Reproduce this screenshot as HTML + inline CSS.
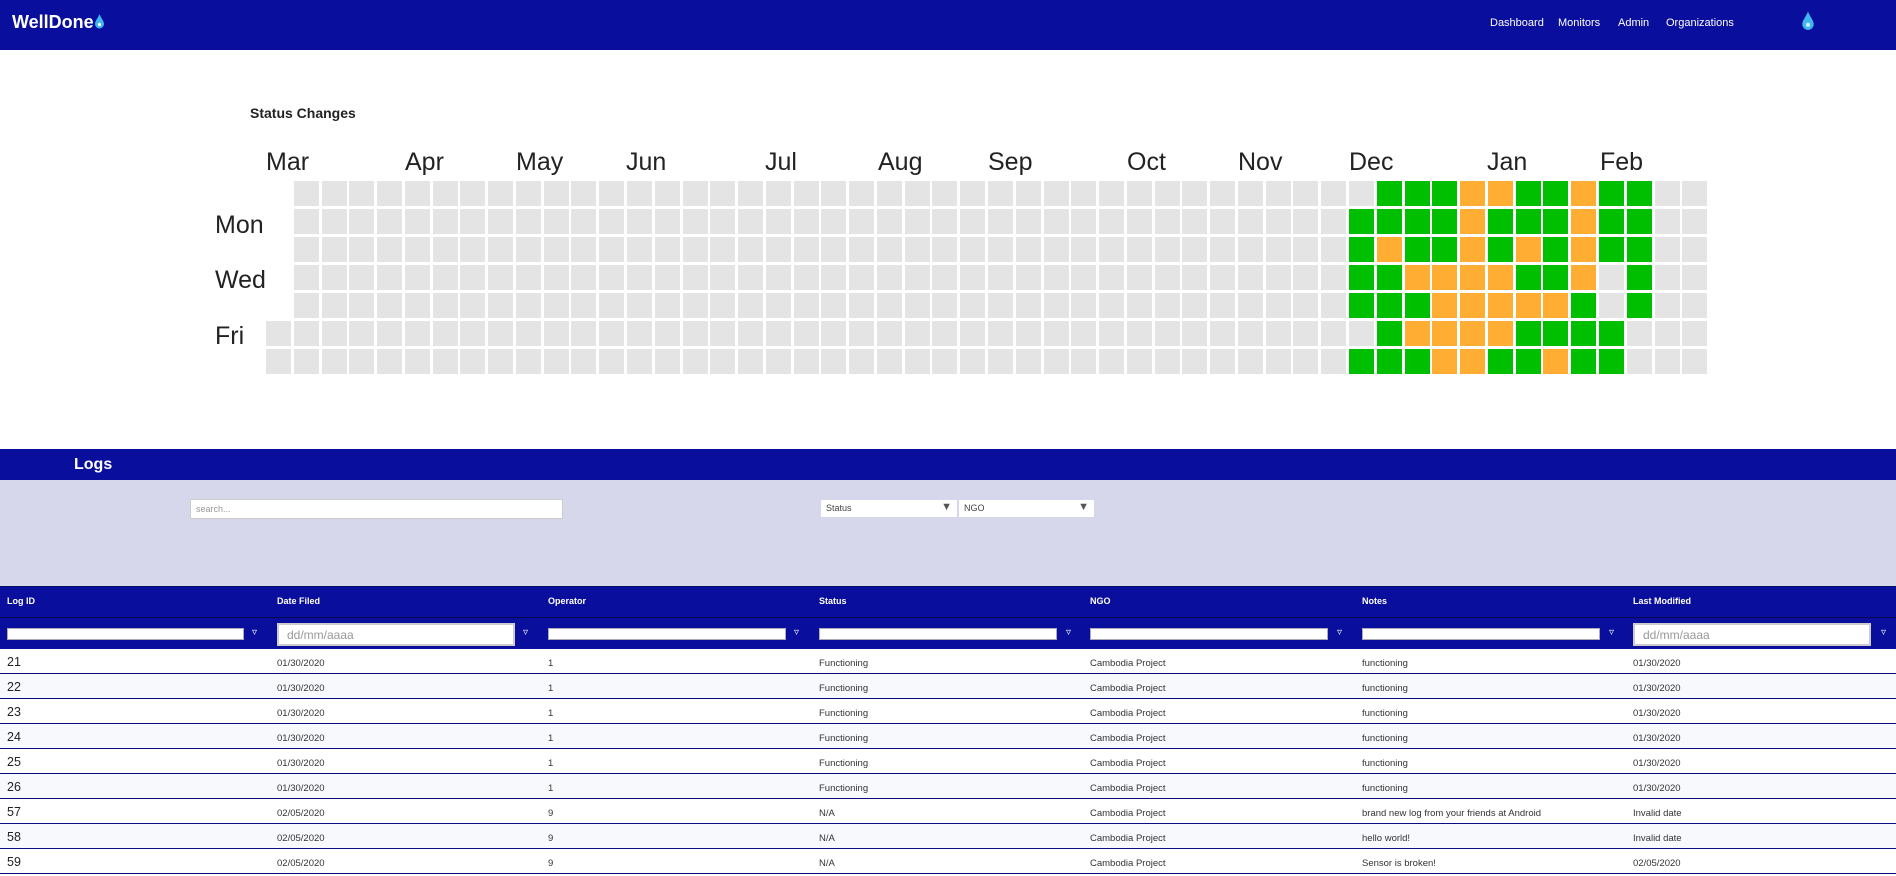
<!DOCTYPE html>
<html><head><meta charset="utf-8">
<style>
*{box-sizing:border-box;margin:0;padding:0}
body{width:1896px;height:876px;overflow:hidden;background:#fff;font-family:"Liberation Sans",sans-serif;position:relative;color:#222}
.a{position:absolute;white-space:nowrap}
.nav{position:absolute;left:0;top:0;width:1896px;height:50px;background:#0a0e9c}
.lnk{color:#fff;font-size:11px;top:17px}
.mon{font-size:25px;color:#222;top:148px}
.day{font-size:25px;color:#222}
.c{position:absolute;width:25px;height:25px;background:#e4e4e4}
.g{background:#00bf00}.o{background:#ffad33}
.hdr{color:#fff;font-size:9px;font-weight:bold;top:596px}
.fi{position:absolute;top:628px;height:12px;background:#fff;border:1px solid #aab}
.di{position:absolute;top:623px;height:23px;width:238px;background:#fff;border:2px solid #ccc;color:#999;font-size:12px;padding:3px 8px}
.fic{position:absolute;top:627px;color:#fff;font-size:10px}
.row{position:absolute;left:0;width:1896px;height:25px;border-bottom:1px solid #0a0e7a}
.row span{position:absolute;top:9px;font-size:9.5px;color:#333}
.row span.id{font-size:12.5px;top:6px;color:#222}
</style></head><body>
<div class="nav"></div>
<div class="a" style="left:12px;top:12px;color:#fff;font-weight:bold;font-size:18px">WellDone<svg width="11" height="15" viewBox="0 0 11 15" style="vertical-align:-1px"><path d="M5.5 0C4 4 1 7 1 10a4.5 4.5 0 0 0 9 0C10 7 7 4 5.5 0z" fill="#3fb6f0"/><circle cx="5.5" cy="10.5" r="1.6" fill="#fff"/></svg></div>
<div class="a lnk" style="left:1490px">Dashboard</div>
<div class="a lnk" style="left:1558px">Monitors</div>
<div class="a lnk" style="left:1618px">Admin</div>
<div class="a lnk" style="left:1666px">Organizations</div>
<svg class="a" style="left:1801px;top:11px" width="14" height="20" viewBox="0 0 11 15"><path d="M5.5 0C4 4 1 7 1 10a4.5 4.5 0 0 0 9 0C10 7 7 4 5.5 0z" fill="#3fb6f0"/><circle cx="5.5" cy="10.5" r="1.6" fill="#cdefff"/></svg>

<div class="a" style="left:250px;top:105px;font-size:14px;font-weight:bold;color:#222">Status Changes</div>
<div class="a mon" style="left:266px">Mar</div>
<div class="a mon" style="left:405px">Apr</div>
<div class="a mon" style="left:516px">May</div>
<div class="a mon" style="left:626px">Jun</div>
<div class="a mon" style="left:765px">Jul</div>
<div class="a mon" style="left:878px">Aug</div>
<div class="a mon" style="left:988px">Sep</div>
<div class="a mon" style="left:1127px">Oct</div>
<div class="a mon" style="left:1238px">Nov</div>
<div class="a mon" style="left:1349px">Dec</div>
<div class="a mon" style="left:1487px">Jan</div>
<div class="a mon" style="left:1600px">Feb</div>
<div class="a day" style="left:215px;top:211px">Mon</div>
<div class="a day" style="left:215px;top:266px">Wed</div>
<div class="a day" style="left:215px;top:322px">Fri</div>
<div id="grid"></div>
<script>
var pat=["egggooggogg","ggggogggogg","goggogogogg","ggooooggoeg","gggoooooggeg".slice(0,8)+"geg","egoooogggge","gggooggogge"];
var h="";
for(var c=0;c<52;c++){for(var r=0;r<7;r++){if(c==0&&r<5)continue;var cl="";
if(c>=39&&c<=49){var ch=pat[r][c-39];if(ch=="g")cl=" g";else if(ch=="o")cl=" o";}
h+='<div class="c'+cl+'" style="left:'+Math.round(266+c*27.77)+'px;top:'+(181+r*28)+'px"></div>';}}
document.getElementById("grid").innerHTML=h;
</script>

<div class="a" style="left:0;top:449px;width:1896px;height:31px;background:#0a0e9c"></div>
<div class="a" style="left:74px;top:456px;color:#fff;font-weight:bold;font-size:16px">Logs</div>
<div class="a" style="left:0;top:480px;width:1896px;height:106px;background:#d6d7ea"></div>
<div class="a" style="left:190px;top:499px;width:373px;height:20px;background:#fff;border:1px solid #ccc;font-size:9px;color:#999;padding:4px 5px">search...</div>
<div class="a" style="left:821px;top:500px;width:136px;height:17px;background:#fff;font-size:9px;color:#444;padding:3px 5px">Status<span style="position:absolute;right:5px;top:1px;font-size:11px;color:#555">▼</span></div>
<div class="a" style="left:959px;top:500px;width:135px;height:17px;background:#fff;font-size:9px;color:#444;padding:3px 5px">NGO<span style="position:absolute;right:5px;top:1px;font-size:11px;color:#555">▼</span></div>

<div class="a" style="left:0;top:586px;width:1896px;height:63px;background:#0a0e9c;border-top:1px solid #061060"></div>
<div class="a" style="left:0;top:617px;width:1896px;height:1px;background:#050850"></div>
<div class="a hdr" style="left:7px">Log ID</div>
<div class="a hdr" style="left:277px">Date Filed</div>
<div class="a hdr" style="left:548px">Operator</div>
<div class="a hdr" style="left:819px">Status</div>
<div class="a hdr" style="left:1090px">NGO</div>
<div class="a hdr" style="left:1362px">Notes</div>
<div class="a hdr" style="left:1633px">Last Modified</div>
<div class="fi" style="left:7px;width:237px"></div><div class="fic" style="left:252px">▿</div>
<div class="di" style="left:277px">dd/mm/aaaa</div><div class="fic" style="left:523px">▿</div>
<div class="fi" style="left:548px;width:238px"></div><div class="fic" style="left:794px">▿</div>
<div class="fi" style="left:819px;width:238px"></div><div class="fic" style="left:1066px">▿</div>
<div class="fi" style="left:1090px;width:238px"></div><div class="fic" style="left:1337px">▿</div>
<div class="fi" style="left:1362px;width:238px"></div><div class="fic" style="left:1609px">▿</div>
<div class="di" style="left:1633px">dd/mm/aaaa</div><div class="fic" style="left:1881px">▿</div>

<div class="row" style="top:649px;background:#fff"><span class="id" style="left:7px">21</span><span style="left:277px">01/30/2020</span><span style="left:548px">1</span><span style="left:819px">Functioning</span><span style="left:1090px">Cambodia Project</span><span style="left:1362px">functioning</span><span style="left:1633px">01/30/2020</span></div>
<div class="row" style="top:674px;background:#f8f9fd"><span class="id" style="left:7px">22</span><span style="left:277px">01/30/2020</span><span style="left:548px">1</span><span style="left:819px">Functioning</span><span style="left:1090px">Cambodia Project</span><span style="left:1362px">functioning</span><span style="left:1633px">01/30/2020</span></div>
<div class="row" style="top:699px;background:#fff"><span class="id" style="left:7px">23</span><span style="left:277px">01/30/2020</span><span style="left:548px">1</span><span style="left:819px">Functioning</span><span style="left:1090px">Cambodia Project</span><span style="left:1362px">functioning</span><span style="left:1633px">01/30/2020</span></div>
<div class="row" style="top:724px;background:#f8f9fd"><span class="id" style="left:7px">24</span><span style="left:277px">01/30/2020</span><span style="left:548px">1</span><span style="left:819px">Functioning</span><span style="left:1090px">Cambodia Project</span><span style="left:1362px">functioning</span><span style="left:1633px">01/30/2020</span></div>
<div class="row" style="top:749px;background:#fff"><span class="id" style="left:7px">25</span><span style="left:277px">01/30/2020</span><span style="left:548px">1</span><span style="left:819px">Functioning</span><span style="left:1090px">Cambodia Project</span><span style="left:1362px">functioning</span><span style="left:1633px">01/30/2020</span></div>
<div class="row" style="top:774px;background:#f8f9fd"><span class="id" style="left:7px">26</span><span style="left:277px">01/30/2020</span><span style="left:548px">1</span><span style="left:819px">Functioning</span><span style="left:1090px">Cambodia Project</span><span style="left:1362px">functioning</span><span style="left:1633px">01/30/2020</span></div>
<div class="row" style="top:799px;background:#fff"><span class="id" style="left:7px">57</span><span style="left:277px">02/05/2020</span><span style="left:548px">9</span><span style="left:819px">N/A</span><span style="left:1090px">Cambodia Project</span><span style="left:1362px">brand new log from your friends at Android</span><span style="left:1633px">Invalid date</span></div>
<div class="row" style="top:824px;background:#f8f9fd"><span class="id" style="left:7px">58</span><span style="left:277px">02/05/2020</span><span style="left:548px">9</span><span style="left:819px">N/A</span><span style="left:1090px">Cambodia Project</span><span style="left:1362px">hello world!</span><span style="left:1633px">Invalid date</span></div>
<div class="row" style="top:849px;background:#fff"><span class="id" style="left:7px">59</span><span style="left:277px">02/05/2020</span><span style="left:548px">9</span><span style="left:819px">N/A</span><span style="left:1090px">Cambodia Project</span><span style="left:1362px">Sensor is broken!</span><span style="left:1633px">02/05/2020</span></div>
</body></html>
